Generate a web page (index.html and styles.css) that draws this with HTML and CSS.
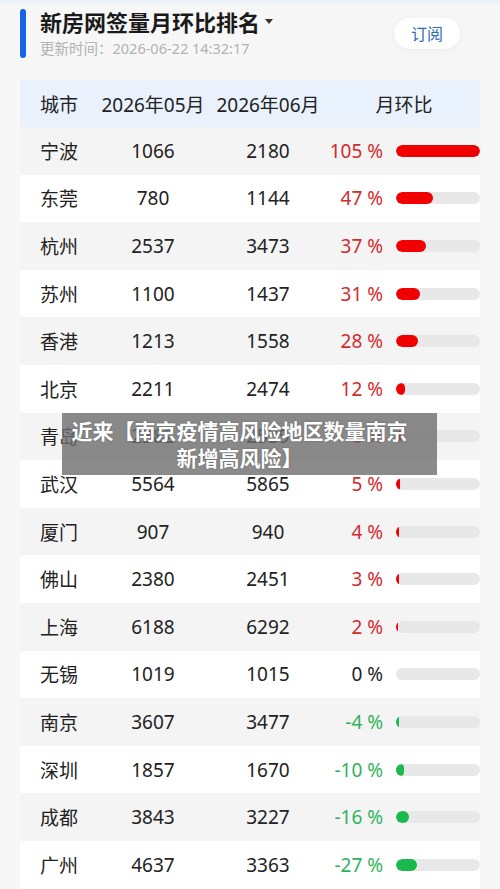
FILE: index.html
```html
<!DOCTYPE html>
<html lang="zh-CN">
<head>
  <meta charset="UTF-8" />
  <meta name="viewport" content="width=device-width, initial-scale=1.0"/>
  <title>新房网签量月环比排名</title>
  <link rel="stylesheet" href="styles.css">
</head>
<body>
  <div class="head">
    <div class="accent"></div>
    <div class="titles">
      <h2>新房网签量月环比排名 <span class="caret"></span></h2>
      <div class="time">更新时间：2026-06-22 14:32:17</div>
    </div>
    <button class="sub">订阅</button>
  </div>

  <div class="table">
    <div class="row th">
      <span>城市</span>
      <span class="num">2026年05月</span>
      <span class="num">2026年06月</span>
      <span class="ratio-head">月环比</span>
    </div>
    <div class="row"><span>宁波</span><span class="num">1066</span><span class="num">2180</span><span class="pct up">105 %</span><div class="track"><div class="fill up" style="width:100%"></div></div></div>
    <div class="row"><span>东莞</span><span class="num">780</span><span class="num">1144</span><span class="pct up">47 %</span><div class="track"><div class="fill up" style="width:44%"></div></div></div>
    <div class="row"><span>杭州</span><span class="num">2537</span><span class="num">3473</span><span class="pct up">37 %</span><div class="track"><div class="fill up" style="width:36%"></div></div></div>
    <div class="row"><span>苏州</span><span class="num">1100</span><span class="num">1437</span><span class="pct up">31 %</span><div class="track"><div class="fill up" style="width:29%"></div></div></div>
    <div class="row"><span>香港</span><span class="num">1213</span><span class="num">1558</span><span class="pct up">28 %</span><div class="track"><div class="fill up" style="width:26%"></div></div></div>
    <div class="row"><span>北京</span><span class="num">2211</span><span class="num">2474</span><span class="pct up">12 %</span><div class="track"><div class="fill up" style="width:11%"></div></div></div>
    <div class="row"><span>青岛</span><span class="num">2382</span><span class="num">2539</span><span class="pct up">6 %</span><div class="track"><div class="fill up" style="width:6%"></div></div></div>
    <div class="row"><span>武汉</span><span class="num">5564</span><span class="num">5865</span><span class="pct up">5 %</span><div class="track"><div class="fill up" style="width:5%"></div></div></div>
    <div class="row"><span>厦门</span><span class="num">907</span><span class="num">940</span><span class="pct up">4 %</span><div class="track"><div class="fill up" style="width:4%"></div></div></div>
    <div class="row"><span>佛山</span><span class="num">2380</span><span class="num">2451</span><span class="pct up">3 %</span><div class="track"><div class="fill up" style="width:3%"></div></div></div>
    <div class="row"><span>上海</span><span class="num">6188</span><span class="num">6292</span><span class="pct up">2 %</span><div class="track"><div class="fill up" style="width:2%"></div></div></div>
    <div class="row"><span>无锡</span><span class="num">1019</span><span class="num">1015</span><span class="pct">0 %</span><div class="track"></div></div>
    <div class="row"><span>南京</span><span class="num">3607</span><span class="num">3477</span><span class="pct down">-4 %</span><div class="track"><div class="fill down" style="width:4%"></div></div></div>
    <div class="row"><span>深圳</span><span class="num">1857</span><span class="num">1670</span><span class="pct down">-10 %</span><div class="track"><div class="fill down" style="width:10%"></div></div></div>
    <div class="row"><span>成都</span><span class="num">3843</span><span class="num">3227</span><span class="pct down">-16 %</span><div class="track"><div class="fill down" style="width:16%"></div></div></div>
    <div class="row"><span>广州</span><span class="num">4637</span><span class="num">3363</span><span class="pct down">-27 %</span><div class="track"><div class="fill down" style="width:25%"></div></div></div>
  </div>

  <div class="caption">近来【南京疫情高风险地区数量南京<br>新增高风险】</div>
</body>
</html>
```

FILE: styles.css
```css
* { box-sizing: border-box; }
body {
  margin: 0;
  font-family: 'Noto Sans', 'Noto Sans CJK SC', sans-serif;
  background: linear-gradient(to bottom, #eaf0fa 0, #f7f7f7 6px) no-repeat, #f7f7f7;
  color: #222;
  height: 889px;
  overflow: hidden;
}
.head {
  display: flex;
  align-items: center;
  height: 80px;
  padding: 0 40px 0 20px;
}
.accent {
  width: 6px;
  height: 49px;
  margin-top: -14px;
  background: #1565e8;
  border-radius: 3px;
  margin-right: 14px;
}
.titles {
  margin-top: -14px;
}
h2 {
  margin: 0;
  font-size: 22px;
  font-weight: bold;
  line-height: 26px;
  color: #1a1a1a;
  display: flex;
  align-items: center;
}
.caret {
  display: inline-block;
  width: 0;
  height: 0;
  margin-left: 5px;
  border-left: 4px solid transparent;
  border-right: 4px solid transparent;
  border-top: 5px solid #333;
}
.time {
  font-size: 14.5px;
  color: #b2b2b2;
  margin-top: 3px;
  line-height: 20px;
}
.sub {
  margin-left: auto;
  margin-top: -14px;
  width: 66px;
  height: 31px;
  border: none;
  border-radius: 16px;
  background: #fff;
  box-shadow: 0 1px 6px rgba(0,0,0,0.06);
  color: #2d6bb5;
  font-size: 16px;
  font-family: 'Noto Sans CJK SC', sans-serif;
  padding: 0;
}
.table {
  margin: 0 20px;
}
.row {
  display: grid;
  grid-template-columns: 58px 110px 120px 68px 84px;
  align-items: center;
  height: 47.6px;
  padding-left: 20px;
  font-size: 19px;
  background: #fff;
}
.row:nth-child(even) {
  background: #f4f4f4;
}
.row.th {
  background: #e9f1fd;
  height: 47px;
}
.num {
  text-align: center;
}
.ratio-head {
  grid-column: 4 / 6;
  text-align: center;
}
.pct {
  text-align: right;
  padding-right: 13px;
}
.pct.up { color: #d12a2f; }
.pct.down { color: #2fb35c; }
.track {
  height: 12px;
  border-radius: 6px;
  background: #e8e8e8;
  overflow: hidden;
}
.fill {
  height: 100%;
  border-radius: 6px;
}
.fill.up { background: #f00000; }
.fill.down { background: #19b94e; }
.caption {
  position: absolute;
  left: 62px;
  top: 413px;
  width: 375px;
  height: 62px;
  padding: 4px 20px 0 0;
  background: rgba(110,110,110,0.8);
  color: #fff;
  font-family: 'Noto Sans CJK SC', sans-serif;
  font-weight: bold;
  font-size: 21px;
  line-height: 27px;
  text-align: center;
  text-shadow: 0 0 2px rgba(0,0,0,0.3);
}
```
